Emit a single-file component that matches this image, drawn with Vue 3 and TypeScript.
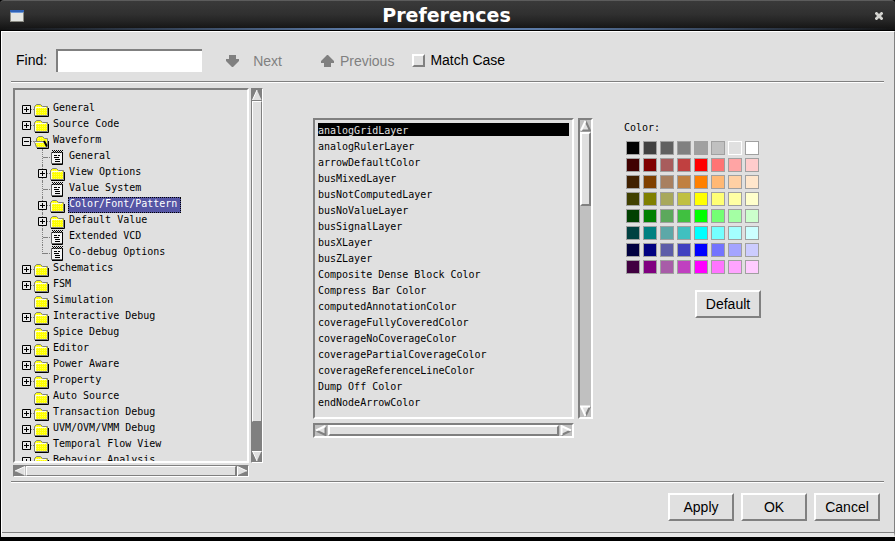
<script setup lang="ts">
import { computed, ref } from 'vue'

type Kind = 'folder' | 'open' | 'page'

interface TreeRow {
  id: number
  label: string
  depth: number
  kind: Kind
  toggle: '' | '+' | '-'
  last?: boolean
}

const root = (id: number, label: string, expandable = true): TreeRow => ({
  id, label, depth: 0, kind: 'folder', toggle: expandable ? '+' : '',
})
const group = (id: number, label: string): TreeRow => ({ id, label, depth: 1, kind: 'folder', toggle: '+' })
const page = (id: number, label: string, last = false): TreeRow => ({
  id, label, depth: 1, kind: 'page', toggle: '', last,
})

const waveformOpen = ref(true)
const rows = computed<TreeRow[]>(() => [
  root(1, 'General'),
  root(2, 'Source Code'),
  {
    id: 3,
    label: 'Waveform',
    depth: 0,
    kind: waveformOpen.value ? 'open' : 'folder',
    toggle: waveformOpen.value ? '-' : '+',
  },
  ...(waveformOpen.value
    ? [
        page(4, 'General'),
        group(5, 'View Options'),
        page(6, 'Value System'),
        group(7, 'Color/Font/Pattern'),
        group(8, 'Default Value'),
        page(9, 'Extended VCD'),
        page(10, 'Co-debug Options', true),
      ]
    : []),
  root(11, 'Schematics'),
  root(12, 'FSM'),
  root(13, 'Simulation', false),
  root(14, 'Interactive Debug'),
  root(15, 'Spice Debug', false),
  root(16, 'Editor'),
  root(17, 'Power Aware'),
  root(18, 'Property'),
  root(19, 'Auto Source', false),
  root(20, 'Transaction Debug'),
  root(21, 'UVM/OVM/VMM Debug'),
  root(22, 'Temporal Flow View'),
  root(23, 'Behavior Analysis'),
])
const activeRow = ref(7)

function toggleRow(row: TreeRow) {
  if (row.id === 3) waveformOpen.value = !waveformOpen.value
}

const layers: string[] = [
  'analogGridLayer', 'analogRulerLayer', 'arrowDefaultColor', 'busMixedLayer',
  'busNotComputedLayer', 'busNoValueLayer', 'busSignalLayer', 'busXLayer', 'busZLayer',
  'Composite Dense Block Color', 'Compress Bar Color', 'computedAnnotationColor',
  'coverageFullyCoveredColor', 'coverageNoCoverageColor', 'coveragePartialCoverageColor',
  'coverageReferenceLineColor', 'Dump Off Color', 'endNodeArrowColor',
]
const activeLayer = ref(layers[0])

const palette: string[] = [
  '#000000', '#404040', '#606060', '#808080', '#a0a0a0', '#c0c0c0', '#e0e0e0', '#ffffff',
  '#400000', '#800000', '#a85c5c', '#c04040', '#ff0000', '#ff7474', '#ffa4a4', '#ffcccc',
  '#402000', '#804000', '#a88060', '#c08040', '#ff8000', '#ffb874', '#ffd0a4', '#ffe6cc',
  '#404000', '#808000', '#a8a85c', '#c0c040', '#ffff00', '#ffff74', '#ffffa4', '#ffffcc',
  '#004000', '#008000', '#5ca85c', '#40c040', '#00ff00', '#74ff74', '#a4ffa4', '#ccffcc',
  '#004040', '#008080', '#5ca8a8', '#40c0c0', '#00ffff', '#74ffff', '#a4ffff', '#ccffff',
  '#000040', '#000080', '#5c5ca8', '#4040c0', '#0000ff', '#7474ff', '#a4a4ff', '#ccccff',
  '#400040', '#800080', '#a85ca8', '#c040c0', '#ff00ff', '#ff74ff', '#ffa4ff', '#ffccff',
]
const activeColor = ref('#e0e0e0')

const query = ref('')
const matchCase = ref(false)
</script>

<template>
  <div class="dialog">
    <header class="titlebar">
      <svg class="app-icon" width="14" height="12" viewBox="0 0 14 12" aria-hidden="true">
        <rect width="14" height="12" fill="#8b8b83" />
        <rect x="1" y="1" width="12" height="10" fill="#e4e6e2" />
        <rect width="14" height="2" fill="#2f62b5" />
        <rect x="1" y="2" width="12" height="1" fill="#6f9ad8" />
      </svg>
      <h1>Preferences</h1>
      <button class="close" type="button" aria-label="Close">
        <svg width="8" height="8" viewBox="0 0 8 8">
          <path d="M0 1 1 0 2 0 4 2 6 0H7L8 1V2L6 4 8 6V7L7 8H6L4 6 2 8H1L0 7V6L2 4 0 2Z" fill="#d4d4d0" />
        </svg>
      </button>
    </header>

    <div class="surface">
      <svg class="defs" width="0" height="0" aria-hidden="true">
        <defs>
          <pattern id="dither" width="2" height="2" patternUnits="userSpaceOnUse">
            <rect width="2" height="2" fill="#ffff00" />
            <rect width="1" height="1" fill="#ffff50" />
          </pattern>
        </defs>
      </svg>

      <form class="find" @submit.prevent>
        <label for="find">Find:</label>
        <input id="find" v-model="query" class="find-box" type="text" />
        <button class="step next" type="button" disabled>
          <svg width="13" height="12" viewBox="0 0 13 12" aria-hidden="true">
            <path d="M3 0H10V4H13V6L7 12H6L0 6V4H3Z" fill="#808080" />
          </svg>
          <span>Next</span>
        </button>
        <button class="step" type="button" disabled>
          <svg width="13" height="12" viewBox="0 0 13 12" aria-hidden="true">
            <path d="M3 12H10V8H13V6L7 0H6L0 6V8H3Z" fill="#808080" />
          </svg>
          <span>Previous</span>
        </button>
        <label class="match">
          <input v-model="matchCase" type="checkbox" />
          <span>Match Case</span>
        </label>
      </form>

      <hr />

      <main class="content">
        <section class="scroller thin" aria-label="Categories">
          <div class="frame">
            <ul class="tree">
              <li
                v-for="row in rows"
                :key="row.id"
                class="row"
                :class="{ child: row.depth === 1, last: row.last }"
              >
                <button
                  v-if="row.toggle"
                  class="toggle"
                  type="button"
                  :aria-label="row.toggle === '+' ? 'Expand' : 'Collapse'"
                  @click="toggleRow(row)"
                >
                  <svg width="9" height="9" viewBox="0 0 9 9">
                    <path d="M.5 .5H8.5V8.5H.5Z" fill="#e8e8e8" stroke="#000" />
                    <path d="M2 4.500H7" stroke="#000" />
                    <path v-if="row.toggle === '+'" d="M4.500 2V7" stroke="#000" />
                  </svg>
                </button>
                <span v-else class="toggle"></span>
                <span class="link" :class="{ dotted: row.toggle || row.depth }"></span>

                <svg v-if="row.kind === 'folder'" class="icon" width="15" height="13" viewBox="0 0 15 13" aria-hidden="true">
                  <path d="M1 12.500H14.500V4" fill="none" stroke="#000" />
                  <path d="M.5 11.500V2.500L2.500 .5H6.500L8.500 2.500H13.500V11.500Z" fill="url(#dither)" stroke="#808080" />
                  <path d="M1.500 11V3.500H12" fill="none" stroke="#ffffe0" />
                </svg>
                <svg v-else-if="row.kind === 'open'" class="icon" width="15" height="13" viewBox="0 0 15 13" aria-hidden="true">
                  <path d="M2.500 5V2.500L4.500 .5H8.500L10.500 2.500H13.500V9" fill="url(#dither)" stroke="#808080" />
                  <path d="M.5 5.500H10.500L13.500 11.500H2.500Z" fill="url(#dither)" stroke="#808080" />
                  <path d="M1 6.500H10" stroke="#f4f4ec" />
                  <path d="M10 5 13 10.500" fill="none" stroke="#000" stroke-width="2" />
                  <path d="M3 12.500H14.500V5" fill="none" stroke="#000" />
                </svg>
                <svg v-else class="icon page" width="15" height="15" viewBox="0 0 15 15" aria-hidden="true">
                  <path d="M1.500 2.500H12.500V13.500H1.500Z" fill="#f4f4f4" stroke="#606060" />
                  <path d="M12.500 3V14.500H2" fill="none" stroke="#000" />
                  <path d="M2 .5H13" stroke="#000" stroke-dasharray="1 1" />
                  <path d="M3 1.500H13" stroke="#000" stroke-dasharray="1 1" />
                  <path d="M2 2.500H13" stroke="#000" stroke-dasharray="1 1" />
                  <path d="M4 5.500H7M8 5.500H10M4 7.500H9M5 9.500H10M5 11.500H10" stroke="#000" />
                </svg>

                <button
                  class="label"
                  :class="{ selected: row.id === activeRow }"
                  type="button"
                  @click="activeRow = row.id"
                >{{ row.label }}</button>
              </li>
            </ul>
          </div>
          <div class="bar vertical">
            <button type="button" aria-label="Scroll up">
              <svg width="10" height="12" viewBox="0 0 10 12"><path d="M5 1 9.500 11H.5Z" fill="#e0e0e0" /><path d="M5 1 .5 11" stroke="#fff" /></svg>
            </button>
            <span class="thumb tree-thumb"></span>
            <span class="trough"></span>
            <button type="button" aria-label="Scroll down">
              <svg width="10" height="12" viewBox="0 0 10 12"><path d="M.5 1H9.500L5 11Z" fill="#e0e0e0" /><path d="M0 1.500H9.500M.5 1 5 11" stroke="#fff" /></svg>
            </button>
          </div>
          <div class="bar horizontal">
            <button type="button" aria-label="Scroll left">
              <svg width="12" height="10" viewBox="0 0 12 10"><path d="M1 5 11 .5V9.500Z" fill="#e0e0e0" /><path d="M1 5 11 .5V9.500" fill="none" stroke="#fff" /></svg>
            </button>
            <span class="thumb fill"></span>
            <button type="button" aria-label="Scroll right">
              <svg width="12" height="10" viewBox="0 0 12 10"><path d="M11 5 1 .5V9.500Z" fill="#e0e0e0" /><path d="M1.500 10V.5L11 5" fill="none" stroke="#fff" /></svg>
            </button>
          </div>
        </section>

        <section class="scroller layers" aria-label="Layers">
          <div class="frame">
            <ul class="list">
              <li v-for="name in layers" :key="name">
                <button
                  type="button"
                  :class="{ current: name === activeLayer }"
                  @click="activeLayer = name"
                >{{ name }}</button>
              </li>
            </ul>
          </div>
          <div class="bar vertical">
            <button type="button" aria-label="Scroll up">
              <svg width="11" height="12" viewBox="0 0 11 12"><path d="M5.500 1 10.500 11H.5Z" fill="#e0e0e0" /><path d="M5.500 1 10 10.500H1" fill="none" stroke="#808080" stroke-width="2" /><path d="M5.500 1 1 10.500" stroke="#fff" stroke-width="2" /></svg>
            </button>
            <span class="thumb list-thumb"></span>
            <span class="trough"></span>
            <button type="button" aria-label="Scroll down">
              <svg width="11" height="12" viewBox="0 0 11 12"><path d="M.5 1H10.500L5.500 11Z" fill="#e0e0e0" /><path d="M10 1.500 5.500 11" stroke="#808080" stroke-width="2" /><path d="M10 1.500H1L5.500 11" fill="none" stroke="#fff" stroke-width="2" /></svg>
            </button>
          </div>
          <div class="bar horizontal">
            <button type="button" aria-label="Scroll left">
              <svg width="12" height="11" viewBox="0 0 12 11"><path d="M1 5.500 11 .5V10.500Z" fill="#e0e0e0" /><path d="M1 5.500 10.500 10V1" fill="none" stroke="#808080" stroke-width="2" /><path d="M1 5.500 10.500 1" stroke="#fff" stroke-width="2" /></svg>
            </button>
            <span class="thumb fill"></span>
            <button type="button" aria-label="Scroll right">
              <svg width="12" height="11" viewBox="0 0 12 11"><path d="M11 5.500 1 .5V10.500Z" fill="#e0e0e0" /><path d="M1.500 10 11 5.500" stroke="#808080" stroke-width="2" /><path d="M1.500 10V1L11 5.500" fill="none" stroke="#fff" stroke-width="2" /></svg>
            </button>
          </div>
        </section>

        <section class="colors" aria-labelledby="color-title">
          <h2 id="color-title">Color:</h2>
          <div class="swatches">
            <button
              v-for="color in palette"
              :key="color"
              class="swatch"
              :class="{ picked: color === activeColor }"
              :style="{ backgroundColor: color }"
              type="button"
              :aria-label="color"
              @click="activeColor = color"
            ></button>
          </div>
          <button class="push" type="button" @click="activeColor = '#e0e0e0'">Default</button>
        </section>
      </main>

      <hr />

      <footer class="actions">
        <button class="push" type="button">Apply</button>
        <button class="push" type="button">OK</button>
        <button class="push" type="button">Cancel</button>
      </footer>
    </div>
  </div>
</template>

<style>
body {
  margin: 0;
  background: #000;
}
</style>

<style scoped>
.dialog,
.dialog * {
  box-sizing: border-box;
}

.dialog {
  display: flex;
  flex-direction: column;
  height: 100vh;
  min-height: 420px;
  padding-bottom: 4px;
  background: #000;
  font: 14px/16px "Liberation Sans", Arial, sans-serif;
  color: #000;
}

button {
  padding: 0;
  border: 0;
  background: none;
  color: inherit;
  font: inherit;
}

svg {
  display: block;
  flex: none;
}

.defs {
  position: absolute;
}

.titlebar {
  position: relative;
  display: grid;
  grid-template-columns: 1fr auto 1fr;
  align-items: center;
  flex: none;
  height: 31px;
  padding: 0 12px 0 10px;
  border-top: 1px solid #5c5c5c;
  border-bottom: 1px solid #000;
  border-radius: 4px 4px 0 0;
  background: linear-gradient(#3a3a3a, #303030 45%, #242424 70%, #121212);
}

.titlebar::after {
  content: "";
  position: absolute;
  right: 0;
  bottom: 0;
  left: 0;
  height: 2px;
  background: linear-gradient(90deg, transparent, #5b7aa6 40%, #5b7aa6 60%, transparent);
}

.titlebar h1 {
  margin: 0;
  padding-bottom: 2px;
  color: #fff;
  font: bold 19px/24px "DejaVu Sans", Verdana, sans-serif;
}

.close {
  justify-self: end;
}

.surface {
  display: flex;
  flex: 1;
  flex-direction: column;
  min-height: 0;
  margin-left: 1px;
  padding: 0 10px 0 9px;
  border: solid;
  border-width: 1px 1px 4px;
  border-color: #fff #808080 #e8e8e8 #fff;
  background: #e0e0e0;
  box-shadow: inset 0 -1px #808080;
}

.find {
  display: flex;
  align-items: center;
  flex: none;
  height: 49px;
  padding: 7px 4px 0 5px;
}

.find-box {
  width: 146px;
  height: 23px;
  margin-left: 9px;
  padding: 0 4px;
  border: solid #808080;
  border-width: 2px 0 0 2px;
  border-radius: 0;
  outline: 0;
  background: #fff;
  font: inherit;
}

.step {
  display: flex;
  align-items: center;
  gap: 6px;
  margin-left: 39px;
  padding-top: 2px;
  color: #808080;
}

.next {
  gap: 14px;
  margin-left: 24px;
}

.match {
  display: flex;
  align-items: center;
  gap: 5px;
  margin-left: 18px;
}

.match input {
  width: 13px;
  height: 13px;
  margin: 0;
  border: 2px solid;
  border-color: #fff #808080 #808080 #fff;
  background: #e0e0e0;
  appearance: none;
}

.match input:checked {
  border-color: #808080 #fff #fff #808080;
}

hr {
  flex: none;
  width: 100%;
  height: 2px;
  margin: 0;
  border: solid;
  border-width: 1px 0;
  border-color: #808080 transparent #fff;
}

.content {
  display: grid;
  flex: 1;
  grid-template-columns: 250fr 299fr 260fr;
  grid-template-rows: minmax(0, 1fr);
  column-gap: 31px;
  min-height: 0;
  padding: 5px 0 4px 2px;
  font: 10px/16px "DejaVu Sans Mono", "Liberation Mono", monospace;
}

.scroller {
  display: grid;
  grid-template-columns: minmax(0, 1fr) 15px;
  grid-template-rows: minmax(0, 1fr) 15px;
  gap: 4px;
  min-width: 0;
}

.scroller.thin {
  grid-template-columns: minmax(0, 1fr) 12px;
  grid-template-rows: minmax(0, 1fr) 12px;
  gap: 2px;
}

.layers {
  margin: 30px 0 39px 19px;
}

.frame {
  min-height: 0;
  overflow: hidden;
  border: 2px solid;
  border-color: #808080 #fff #fff #808080;
}

ul {
  height: 100%;
  margin: 0;
  overflow: hidden;
  list-style: none;
}

.tree {
  padding: 11px 0 0;
}

.row {
  position: relative;
  display: flex;
  align-items: center;
  height: 16px;
  padding-left: 7px;
}

.row.child {
  padding-left: 23px;
}

.row.child::before {
  content: "";
  position: absolute;
  top: 0;
  bottom: 0;
  left: 27px;
  border-left: 1px dotted #808080;
}

.row.last::before {
  bottom: 7px;
}

.toggle {
  position: relative;
  flex: none;
  width: 9px;
  margin-top: 1px;
}

span.toggle {
  height: 1px;
}

.child span.toggle {
  background: linear-gradient(#808080, #808080) right / 4px 1px no-repeat;
}

.link {
  flex: none;
  width: 3px;
  height: 1px;
  margin-top: 1px;
}

.dotted {
  border-top: 1px dotted #808080;
}

.icon {
  position: relative;
  margin: 3px 3px 0 0;
}

.icon.page {
  margin-top: 1px;
}

.label {
  height: 16px;
  padding: 0 3px 2px 0;
  border: 1px solid transparent;
  line-height: 12px;
  white-space: nowrap;
}

.label.selected {
  border: 1px dotted #000;
  background: #5555a5;
  color: #fff;
}

.list {
  padding: 3px;
}

.list li {
  height: 16px;
}

.list button {
  display: block;
  width: 100%;
  height: 13px;
  padding-top: 2px;
  line-height: 11px;
  text-align: left;
  white-space: nowrap;
}

.list .current {
  background: #000;
  color: #e0e0e0;
}

.bar {
  display: flex;
  min-width: 0;
  min-height: 0;
  border: 2px solid;
  border-color: #808080 #fff #fff #808080;
  background: #c0c0c0;
}

.thin .bar {
  border-width: 1px;
  background: #808080;
}

.bar.vertical {
  flex-direction: column;
}

.bar button {
  flex: none;
}

.thumb {
  border: 2px solid;
  border-color: #fff #808080 #808080 #fff;
  background: #e0e0e0;
}

.thin .thumb {
  border-width: 1px;
}

.vertical .thumb {
  flex: none;
}

.tree-thumb {
  height: 86%;
}

.list-thumb {
  height: 25%;
}

.fill,
.trough {
  flex: 1;
}

.layers .fill {
  margin: 0 1px;
}

.colors {
  display: flex;
  flex-direction: column;
  align-items: flex-start;
  padding-top: 32px;
}

.colors h2 {
  margin: 0;
  font: inherit;
}

.swatches {
  display: grid;
  grid-template-columns: repeat(8, 14px);
  gap: 3px;
  margin: 5px 0 16px 2px;
}

.swatch {
  height: 14px;
  border: 1px solid #a0a0a0;
}

.swatch.picked {
  border-color: #fff;
}

.push {
  flex: none;
  width: 66px;
  height: 28px;
  border: 2px solid;
  border-color: #fff #808080 #808080 #fff;
  background: #e0e0e0;
  font: 14px/16px "Liberation Sans", Arial, sans-serif;
}

.colors .push {
  margin-left: 71px;
}

.actions {
  display: flex;
  flex: none;
  justify-content: flex-end;
  gap: 7px;
  padding: 10px 4px 12px;
}
</style>
